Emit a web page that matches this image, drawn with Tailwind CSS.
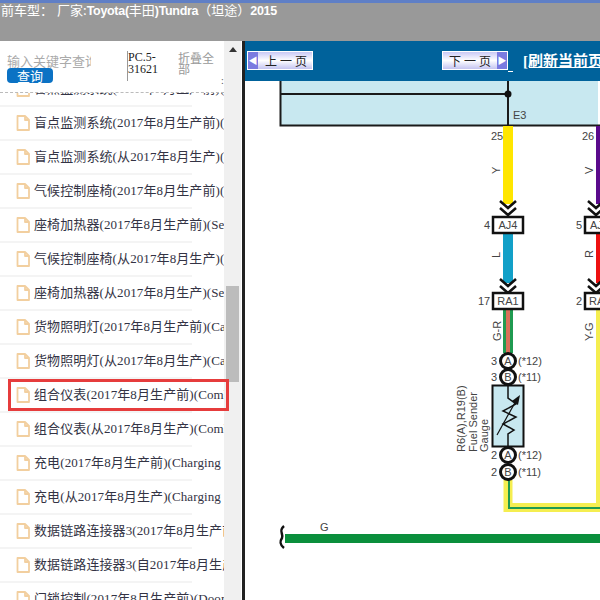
<!DOCTYPE html>
<html>
  <head>
    <title>Wiring diagram</title>
    <meta charset="UTF-8">
    <meta name="viewport" content="width=device-width, initial-scale=1.0">
    <script src="https://cdn.jsdelivr.net/npm/@tailwindcss/browser@4"></script>
  </head>
  <body class="w-[600px] h-[600px] overflow-hidden bg-white font-['Liberation_Serif','Noto_Sans_CJK_SC',serif]">
    <!-- top bar -->
    <header class="h-[41px] bg-[#999999] border-t-[3px] border-[#5f7fc6] text-white text-[13px] leading-[13px] pl-[1px] whitespace-nowrap overflow-hidden font-['Noto_Sans_CJK_SC',sans-serif]">
      <span class="mr-[4px]">前车型：</span><span>厂家:</span><b class="text-[12.5px] tracking-[-0.3px] font-['Liberation_Sans','Noto_Sans_CJK_SC',sans-serif]">Toyota(<span class="font-normal text-[13px] tracking-normal">丰田</span>)Tundra<span class="font-normal text-[13px] tracking-normal">（坦途）</span>2015</b>
    </header>

    <div class="relative flex h-[559px]">
      <!-- left panel -->
      <aside class="w-[224px] shrink-0 overflow-hidden flex flex-col">
        <div class="h-[52px] shrink-0 relative z-10 bg-white flex border-b border-dashed border-[#bbbbbb]">
          <div class="w-[120px] pl-[7px] pt-[12px] shrink-0">
            <div class="w-[84px] overflow-hidden whitespace-nowrap text-[13px] leading-[15px] text-[#aaaaaa] font-['Noto_Sans_CJK_SC',sans-serif]">输入关键字查询</div>
            <button class="block w-[46px] h-[15px] rounded-[4px] bg-[#0b72c4] text-white text-[13px] leading-[15px] font-['Noto_Sans_CJK_SC',sans-serif]">查询</button>
          </div>
          <div class="w-[51px] ml-[7px] mt-[10px] h-[30px] border-l border-[#999999] text-[12px] leading-[12px] text-[#222222] shrink-0">PC.5-<br>31621</div>
          <div class="w-[37px] mt-[11px] text-[12px] leading-[11px] text-[#999999] font-['Noto_Sans_CJK_SC',sans-serif] shrink-0">折叠全部</div>
          <div class="text-[10px] leading-[11px] text-[#555555] mt-[34px] ml-[6px]">:</div>
        </div>
        <ul id="rows" class="-mt-[20px] text-[13px] tracking-[0.1px] text-[#333344]"></ul>
      </aside>

      <!-- scrollbar -->
      <div class="w-[17px] shrink-0 bg-[#f0f0f0] relative">
        <div class="mx-auto mt-[6px] w-0 h-0 border-x-[4px] border-x-transparent border-b-[5px] border-b-[#333333]"></div>
        <div class="absolute left-[2px] top-[245px] w-[13px] h-[96px] bg-[#bcbcbc]"></div>
      </div>
      <div class="w-[1px] shrink-0 bg-white"></div>
      <div class="w-[3px] shrink-0 bg-[#222222]"></div>

      <!-- right panel -->
      <main class="flex-1 min-w-0 overflow-hidden">
        <div class="h-[40px] bg-[#00629b] flex items-center pl-[2px] whitespace-nowrap">
          <button class="w-[66px] h-[19px] -mt-[1px] shrink-0 border border-white bg-gradient-to-b from-[#c9c9f5] via-white to-[#c4c4f0] flex items-center text-[#222222] text-[12px] font-['Noto_Sans_CJK_SC',sans-serif]">
            <span class="w-[10px] h-[17px] bg-[#7b7be0] text-white text-[9px] leading-[17px] text-center">◀</span>
            <span class="ml-[7px] tracking-[3px]">上一页</span>
          </button>
          <span class="w-[129px] shrink-0"></span>
          <button class="w-[66px] h-[19px] -mt-[1px] shrink-0 border border-white bg-gradient-to-b from-[#c9c9f5] via-white to-[#c4c4f0] flex items-center justify-end text-[#222222] text-[12px] font-['Noto_Sans_CJK_SC',sans-serif]">
            <span class="mr-[3px] tracking-[3px]">下一页</span>
            <span class="w-[10px] h-[17px] bg-[#7b7be0] text-white text-[9px] leading-[17px] text-center">▶</span>
          </button>
          <span class="w-[5px] mr-[10px] shrink-0 self-end mb-[9px] border-b border-white"></span>
          <a class="text-white font-bold text-[15px] underline font-['Liberation_Serif','Noto_Sans_CJK_SC',serif]">[刷新当前页面]</a>
        </div>

        <!-- wiring diagram, origin at x=245 y=81 -->
        <svg width="355" height="519" viewBox="245 81 355 519" class="block font-['Liberation_Sans',sans-serif]" fill="#444444" font-size="11">
          <rect x="280" y="80" width="318" height="45" fill="#c8e8f0"/>
          <path d="M280.500 80V125.500H600M280 94H508M508 80V125" fill="none" stroke="#1a1a1a" stroke-width="2"/>
          <circle cx="508" cy="94" r="3.500" fill="#111111"/>
          <text x="513" y="119">E3</text>

          <!-- left wire -->
          <rect x="503" y="126" width="10" height="78" fill="#ffe600"/>
          <rect x="503" y="233" width="10" height="50" fill="#12a0c8"/>
          <rect x="503" y="309" width="10" height="44" fill="#1f9a50"/>
          <rect x="506" y="309" width="4" height="44" fill="#d9705a"/>
          <path d="M508 480V507.500H600" fill="none" stroke="#f5ee50" stroke-width="9"/>
          <path d="M509 480V508H600" fill="none" stroke="#1f9a50" stroke-width="2"/>

          <!-- right wire -->
          <rect x="596" y="126" width="4" height="78" fill="#5a0a8c"/>
          <rect x="596" y="233" width="4" height="50" fill="#ee1111"/>
          <rect x="596" y="309" width="4" height="197" fill="#f5ee50"/>

          <!-- chevrons -->
          <path d="M500 201L508 208L516 201M500 208L508 215L516 208M500 279L508 286L516 279M500 286L508 293L516 286M588 201L596 208L604 201M588 208L596 215L604 208M588 279L596 286L604 279M588 286L596 293L604 286" fill="none" stroke="#111111" stroke-width="2.500"/>

          <!-- connector boxes -->
          <g fill="#ffffff" stroke="#111111" stroke-width="2.500">
            <rect x="493" y="217" width="30" height="16"/>
            <rect x="493" y="293" width="30" height="16"/>
            <rect x="585" y="217" width="30" height="16"/>
            <rect x="585" y="293" width="30" height="16"/>
          </g>
          <text x="508" y="229" text-anchor="middle">AJ4</text>
          <text x="508" y="305" text-anchor="middle">RA1</text>
          <text x="590" y="229">AJ</text>
          <text x="589" y="305">RA</text>

          <!-- pin numbers -->
          <text x="491" y="140">25</text>
          <text x="582" y="140">26</text>
          <text x="484" y="229">4</text>
          <text x="576" y="229">5</text>
          <text x="478" y="305">17</text>
          <text x="576" y="305">2</text>

          <!-- wire colour labels -->
          <text transform="translate(500 174) rotate(-90)">Y</text>
          <text transform="translate(593 174) rotate(-90)">V</text>
          <text transform="translate(500 258) rotate(-90)">L</text>
          <text transform="translate(593 258) rotate(-90)">R</text>
          <text transform="translate(501 341) rotate(-90)">G-R</text>
          <text transform="translate(593 341) rotate(-90)">Y-G</text>

          <!-- sender gauge -->
          <rect x="492.500" y="385.500" width="31" height="61" fill="#c8e8f0" stroke="#111111" stroke-width="2"/>
          <path d="M508 385V398L516 404L503 411L516 417L503 424L514 430L508 434V446" fill="none" stroke="#111111" stroke-width="1.500"/>
          <path d="M497 435L517 399" fill="none" stroke="#111111" stroke-width="1.200"/>
          <path d="M520 395L518 405L512 401Z" fill="#111111"/>
          <g fill="#ffffff" stroke="#111111" stroke-width="3">
            <circle cx="508" cy="361" r="7.500"/>
            <circle cx="508" cy="377" r="7.500"/>
            <circle cx="508" cy="455" r="7.500"/>
            <circle cx="508" cy="472" r="7.500"/>
          </g>
          <g text-anchor="middle">
            <text x="508" y="365">A</text>
            <text x="508" y="381">B</text>
            <text x="508" y="459">A</text>
            <text x="508" y="476">B</text>
          </g>
          <text x="491" y="365">3</text>
          <text x="491" y="381">3</text>
          <text x="491" y="459">2</text>
          <text x="491" y="476">2</text>
          <text x="518" y="365">(*12)</text>
          <text x="518" y="381">(*11)</text>
          <text x="518" y="459">(*12)</text>
          <text x="518" y="476">(*11)</text>
          <text transform="translate(465 452) rotate(-90)">R6(A),R19(B)</text>
          <text transform="translate(477 452) rotate(-90)">Fuel Sender</text>
          <text transform="translate(488 452) rotate(-90)">Gauge</text>

          <!-- ground wire -->
          <rect x="285" y="534" width="315" height="9" fill="#0a8f3c"/>
          <path d="M284 526C278 531 284 534 282 538C280 541 279 544 284 548" fill="none" stroke="#111111" stroke-width="2.500"/>
          <text x="320" y="531">G</text>
        </svg>
      </main>

      <!-- red highlight drawn over the list -->
      <div class="absolute left-[8px] top-[338px] w-[221px] h-[32px] border-[3px] border-[#e63c3c]"></div>
    </div>

    <script>
      let rowData = [
        "盲点监测系统(2017年8月生产前)(Blind Spot)",
        "盲点监测系统(2017年8月生产前)(Blind Spot)",
        "盲点监测系统(从2017年8月生产)(Blind Spot)",
        "气候控制座椅(2017年8月生产前)(Climate Seat)",
        "座椅加热器(2017年8月生产前)(Seat Heater)",
        "气候控制座椅(从2017年8月生产)(Climate Seat)",
        "座椅加热器(从2017年8月生产)(Seat Heater)",
        "货物照明灯(2017年8月生产前)(Cargo Lamp)",
        "货物照明灯(从2017年8月生产)(Cargo Lamp)",
        "组合仪表(2017年8月生产前)(Combination Meter)",
        "组合仪表(从2017年8月生产)(Combination Meter)",
        "充电(2017年8月生产前)(Charging System)",
        "充电(从2017年8月生产)(Charging System)",
        "数据链路连接器3(2017年8月生产前)",
        "数据链路连接器3(自2017年8月生产)",
        "门锁控制(2017年8月生产前)(Door Lock)"
      ];
      document.getElementById("rows").innerHTML = rowData.map(txt => `
        <li class="w-[192px] h-[34px] border-b-[2px] border-[#f4f4f4] flex items-center whitespace-nowrap">
          <svg width="14" height="16" viewBox="0 0 14 16" class="ml-[16px] mr-[4px] shrink-0" fill="none" stroke="#f2cf9f" stroke-width="1.800" stroke-linejoin="round"><path d="M1.500 1H9L13 5V15H1.500Z"/><path d="M9 1V5H13"/></svg>
          <span>${txt}</span>
        </li>`).join("");
    </script>
  </body>
</html>
